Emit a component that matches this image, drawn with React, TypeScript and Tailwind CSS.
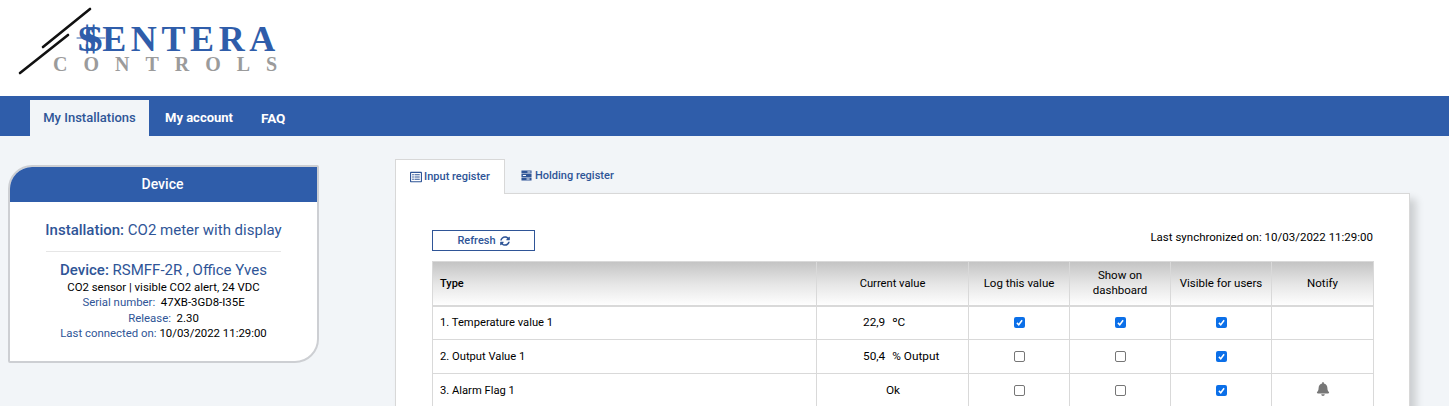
import { FaBell, FaRegListAlt, FaSyncAlt } from "react-icons/fa";

const rows = [
  { type: "1. Temperature value 1", value: "22,9", unit: "ºC", log: true, dash: true, visible: true },
  { type: "2. Output Value 1", value: "50,4", unit: "% Output", log: false, dash: false, visible: true },
  { type: "3. Alarm Flag 1", value: "Ok", unit: "", log: false, dash: false, visible: true, bell: true },
];

function Check({ on }: { on: boolean }) {
  if (!on) {
    return <span className="mx-auto block h-[11px] w-[11px] rounded-[2px] border border-[#767676] bg-white" />;
  }
  return (
    <span className="mx-auto flex h-[11px] w-[11px] items-center justify-center rounded-[2px] bg-[#0b6fe8]">
      <svg viewBox="0 0 12 12" className="h-[9px] w-[9px]" fill="none" stroke="#fff" strokeWidth="2">
        <path d="M2.5 6.5 5 9l4.5-6" />
      </svg>
    </span>
  );
}

function Logo() {
  return (
    <div className="relative h-[96px] w-[300px] shrink-0">
      <svg viewBox="0 0 300 96" className="absolute inset-0 h-full w-full" fill="none" stroke="#111" strokeWidth="2.6" strokeLinecap="round">
        <path d="M43 47 90 9" />
        <path d="M20 73 68 35" />
        <path d="M77 38h28" stroke="#2f5daa" strokeWidth="1" />
      </svg>
      <div className="absolute left-[78px] top-[24px] font-['Liberation_Serif',serif] text-[36px] font-bold leading-[30px] tracking-[4.6px] text-[#2f5daa] whitespace-nowrap">
        <span>$</span>
        <span className="ml-[-16px]">$</span>
        <span className="ml-[-5px]">ENTERA</span>
      </div>
      <div className="absolute left-[53px] top-[55px] font-['Liberation_Serif',serif] text-[20px] font-bold leading-[18px] tracking-[16px] text-[#9b9b9b] whitespace-nowrap">
        CONTROLS
      </div>
    </div>
  );
}

export default function App() {
  return (
    <div className="h-[406px] overflow-hidden bg-[#f2f5f8] font-['Roboto',sans-serif] text-black">
      <header className="h-[96px] bg-white">
        <Logo />
      </header>

      <nav className="flex h-[40px] items-end bg-[#2f5daa] pl-[30px] text-[13px] font-bold">
        <a className="flex h-[36px] w-[119px] items-center justify-center bg-[#f2f5f8] font-medium text-[#2f5597]">My Installations</a>
        <a className="ml-[16px] flex h-[36px] items-center text-white">My account</a>
        <a className="ml-[28px] flex h-[36px] items-center text-[13.5px] text-white">FAQ</a>
      </nav>

      <main className="flex items-start pl-[8px] pt-[23px]">
        <section className="mt-[6px] h-[198px] w-[311px] shrink-0 overflow-hidden rounded-bl-[2px] rounded-br-[24px] rounded-tl-[24px] rounded-tr-[2px] border-[2px] border-[#cdcfd3] bg-white text-center">
          <div className="flex h-[35px] items-center justify-center bg-[#2f5daa] pr-[2px] text-[14px] font-medium text-white">Device</div>
          <div className="px-[16px] pt-[17px]">
            <p className="text-[15px] leading-[22px] text-[#2f5597]">
              <span className="font-medium">Installation:</span> CO2 meter with display
            </p>
            <div className="mx-[20px] mt-[10px] border-t border-[#e6e6e6]" />
            <p className="mt-[8px] text-[15px] leading-[20px] text-[#2f5597]">
              <span className="font-medium">Device:</span> RSMFF-2R , Office Yves
            </p>
            <p className="text-[11.4px] leading-[15px]">CO2 sensor | visible CO2 alert, 24 VDC</p>
            <p className="text-[11.4px] leading-[15px]">
              <span className="text-[#2f5597]">Serial number:</span>&nbsp; 47XB-3GD8-I35E
            </p>
            <p className="mt-[1px] text-[11.4px] leading-[15px]">
              <span className="text-[#2f5597]">Release:</span>&nbsp; 2.30
            </p>
            <p className="text-[11.4px] leading-[15px]">
              <span className="text-[#2f5597]">Last connected on:</span> 10/03/2022 11:29:00
            </p>
          </div>
        </section>

        <section className="ml-[76px] w-[1015px] shrink-0">
          <div className="flex h-[34px] items-end text-[11px] font-medium text-[#2f5597]">
            <a className="z-10 mb-[-1px] flex h-[35px] w-[110px] items-center justify-center gap-[2px] border border-b-0 border-[#d8d8d8] bg-white">
              <FaRegListAlt size={12} />
              Input register
            </a>
            <a className="flex h-[34px] items-center gap-[3px] pl-[16px] pt-[1px]">
              <svg viewBox="0 0 12 12" className="mt-[-2px] h-[11px] w-[11px]" fill="#2f5597">
                <path d="M0.5 0.5h11v3.2H0.5zM0.5 4.4h11v3.2H0.5zM0.5 8.3h11v3.2H0.5z" />
                <path d="M7 1.6h3.4v1H7zM2 5.5h3.4v1H2zM6 9.4h3.4v1H6z" fill="#fff" />
              </svg>
              Holding register
            </a>
          </div>

          <div className="border border-[#d8d8d8] bg-white pl-[36px] pr-[36px] pt-[36px] shadow-[6px_6px_8px_rgba(0,0,0,0.16)]">
            <div className="flex h-[31px] items-start justify-between">
              <button className="flex h-[21px] w-[103px] items-center justify-center gap-[4px] border border-[#2f5597] pt-[1px] text-[11px] font-medium text-[#2f5597]">
                Refresh <FaSyncAlt size={10} />
              </button>
              <span className="text-[11.5px] leading-[15px]">Last synchronized on: 10/03/2022 11:29:00</span>
            </div>

            <table className="w-[941px] table-fixed border-collapse text-[11.2px]">
              <colgroup>
                <col className="w-[384px]" />
                <col className="w-[152px]" />
                <col className="w-[101px]" />
                <col className="w-[101px]" />
                <col className="w-[101px]" />
                <col className="w-[102px]" />
              </colgroup>
              <thead>
                <tr className="h-[44px] bg-gradient-to-b from-[#c4c4c4] via-[#e6e6e6] to-white text-center text-[11.5px] leading-[15px]">
                  <th className="border border-b-[2px] border-[#d9d9d9] pl-[7px] text-left text-[11px] font-medium">Type</th>
                  <th className="border border-b-[2px] border-[#d9d9d9] text-[11.2px] font-normal">Current value</th>
                  <th className="border border-b-[2px] border-[#d9d9d9] font-normal">Log this value</th>
                  <th className="border border-b-[2px] border-[#d9d9d9] font-normal">Show on<br />dashboard</th>
                  <th className="border border-b-[2px] border-[#d9d9d9] font-normal">Visible for users</th>
                  <th className="border border-b-[2px] border-[#d9d9d9] font-normal">Notify</th>
                </tr>
              </thead>
              <tbody>
                {rows.map((r) => (
                  <tr key={r.type} className="h-[34px]">
                    <td className="border border-[#d9d9d9] pl-[7px] pt-[1px]">{r.type}</td>
                    <td className={r.unit ? "border border-[#d9d9d9] pl-[46px] text-[11.8px]" : "border border-[#d9d9d9] pl-[69px] text-[11.8px]"}>
                      {r.value}
                      {r.unit && <span className="ml-[7px]">{r.unit}</span>}
                    </td>
                    <td className="border border-[#d9d9d9]"><Check on={r.log} /></td>
                    <td className="border border-[#d9d9d9]"><Check on={r.dash} /></td>
                    <td className="border border-[#d9d9d9]"><Check on={r.visible} /></td>
                    <td className="border border-[#d9d9d9]">
                      {r.bell && <FaBell size={14} className="mx-auto mb-[3px] text-[#777]" />}
                    </td>
                  </tr>
                ))}
              </tbody>
            </table>
          </div>
        </section>
      </main>
    </div>
  );
}
